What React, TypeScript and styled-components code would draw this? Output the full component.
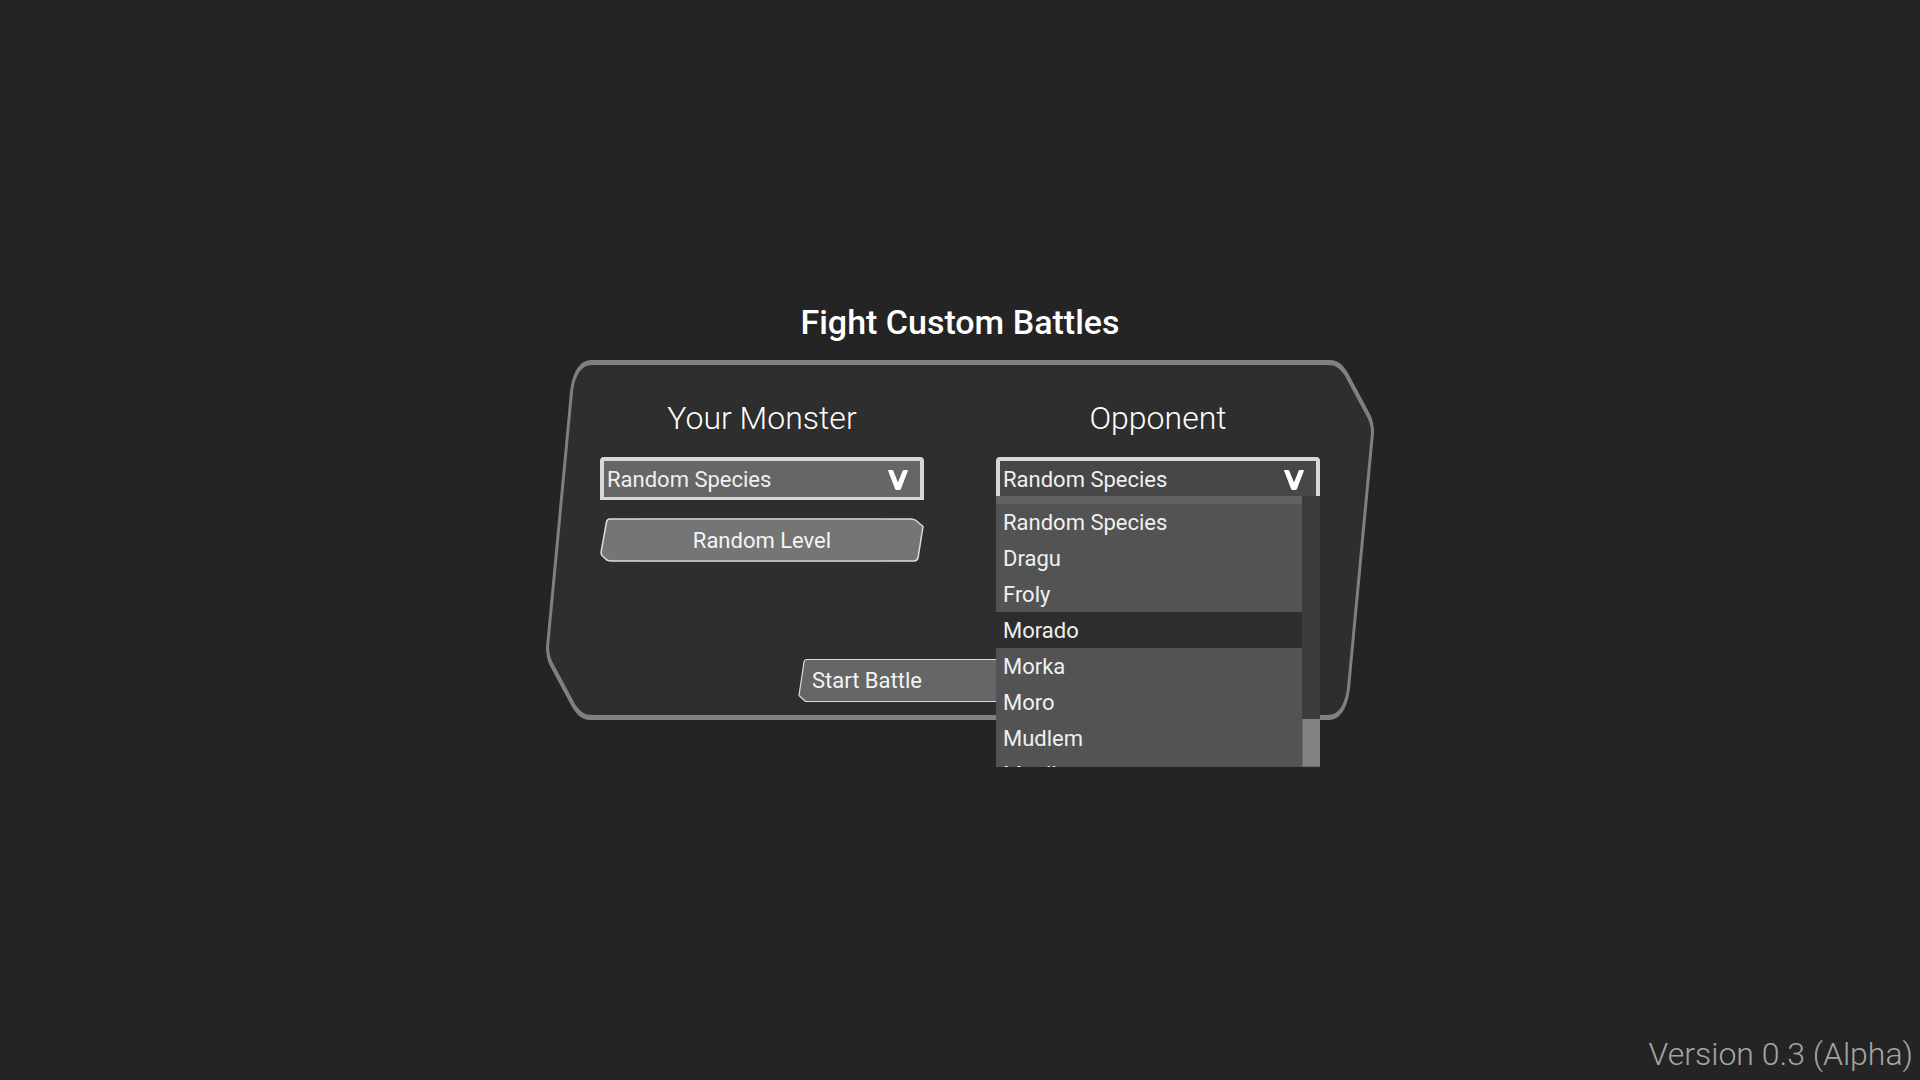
import React, { useState } from "react";
import styled, { createGlobalStyle } from "styled-components";

const GlobalStyle = createGlobalStyle`
  *, *::before, *::after { box-sizing: border-box; }
  body {
    margin: 0;
    background: #242424;
    color: #ffffff;
    font-family: Roboto, "Liberation Sans", sans-serif;
  }
`;

const Page = styled.main`
  min-height: 100vh;
  display: grid;
  grid-template-rows: 1fr auto 1fr;
  justify-items: center;
`;

const Title = styled.h1`
  margin: 0 0 18px;
  align-self: end;
  font-size: 34px;
  line-height: 40px;
  font-weight: 500;
`;

const Panel = styled.section`
  position: relative;
  isolation: isolate;
  width: 100%;
  max-width: 828px;
  padding: 38px 54px 18px;
`;

const Backdrop = styled.svg`
  position: absolute;
  inset: 0;
  z-index: -1;
  width: 100%;
  height: 100%;
`;

const Sides = styled.div`
  display: grid;
  grid-template-columns: 1fr 1fr;
  column-gap: 72px;
`;

const Side = styled.div`
  display: flex;
  flex-direction: column;
`;

const SideTitle = styled.h2`
  margin: 0 0 19px;
  text-align: center;
  font-size: 32px;
  line-height: 40px;
  font-weight: 300;
`;

const Picker = styled.div`
  position: relative;
  margin-bottom: 18px;
`;

const SpeciesSelect = styled.select<{ $open?: boolean }>`
  display: block;
  width: 100%;
  height: 43px;
  padding: 0 40px 0 3px;
  border: 4px solid #d8d8d8;
  border-bottom-width: 3px;
  border-radius: 4px 4px 0 0;
  appearance: none;
  outline: none;
  background: ${(p) => (p.$open ? "#474747" : "#666666")};
  color: #f0f0f0;
  font: 400 22px "Roboto", "Liberation Sans", sans-serif;
`;

const Arrow = styled.svg`
  position: absolute;
  top: 13px;
  right: 16px;
  width: 20px;
  height: 20px;
  pointer-events: none;
`;

const Popup = styled.div`
  position: absolute;
  top: 39px;
  left: 0;
  right: 0;
  z-index: 2;
  height: 271px;
  display: grid;
  grid-template-columns: 1fr 18px;
  overflow: hidden;
`;

const Options = styled.ul`
  margin: 0;
  padding: 0;
  list-style: none;
  overflow: hidden;
  border-top: 8px solid #626262;
  background: #535353;
`;

const Option = styled.li<{ $active?: boolean }>`
  height: 36px;
  padding: 1px 7px 0;
  background: ${(p) => (p.$active ? "#2d2d2d" : "transparent")};
  color: #f0f0f0;
  font-size: 22px;
  line-height: 36px;
`;

const Track = styled.div`
  display: flex;
  align-items: flex-end;
  background: #3c3c3c;
`;

const Thumb = styled.div`
  width: 100%;
  height: 48px;
  border: solid #6a6a6a;
  border-width: 0 0 1px 1px;
  background: #828282;
`;

const ActionButton = styled.button<{ $align: string }>`
  position: relative;
  isolation: isolate;
  width: 324px;
  max-width: 100%;
  height: 44px;
  padding: 1px 14px 0;
  border: 0;
  background: none;
  color: #f4f4f4;
  font: 400 22px "Roboto", "Liberation Sans", sans-serif;
  text-align: ${(p) => p.$align};
`;

const Actions = styled.div`
  display: flex;
  justify-content: center;
  margin-top: 96px;
`;

const Version = styled.footer`
  align-self: end;
  justify-self: end;
  padding: 0 7px 6px;
  color: #a4a4a4;
  font-size: 32px;
  line-height: 40px;
  font-weight: 300;
`;

const PanelBackdrop = () => (
  <Backdrop viewBox="0 0 828 360" preserveAspectRatio="none" aria-hidden="true">
    <path
      fill="#808080"
      d="M45 0H784C792 0 797 5 802 13L824 54Q828 62 828 73L804 328C802 346 795 360 783 360H44C36 360 31 355 26 347L4 306Q0 298 0 287L24 32C26 14 33 0 45 0Z"
    />
    <path
      fill="#2e2e2e"
      d="M46 5H782C789 5 794 8 799 16L821 57Q825 64 825 73L801 328C799 344 793 355 782 355H46C39 355 34 352 29 344L7 303Q3 296 3 287L27 32C29 16 35 5 46 5Z"
    />
  </Backdrop>
);

const ButtonBackdrop = ({ active }: { active?: boolean }) => (
  <Backdrop viewBox="0 0 324 44" preserveAspectRatio="none" aria-hidden="true">
    <path
      fill={active ? "#757575" : "#666666"}
      stroke="#dcdcdc"
      strokeWidth={active ? 1.5 : 1.2}
      d={
        active
          ? "M10 1H311Q314 1 316 2.500L323 8.500L318 40Q317 43 314 43H11Q9 43 7 42L2 37.500Q1 36 1 34.500L6.500 4Q7 1 10 1Z"
          : "M9 1.500H312Q314 1.500 316 3L323 9L318 41Q317 43.500 315 43.500H7.500L1 37.500L6 4Q6.500 1.500 9 1.500Z"
      }
    />
    {active && <path d="M40 1H284M40 43H284" stroke="#b4b4b4" strokeWidth="1" />}
  </Backdrop>
);

const ArrowIcon = () => (
  <Arrow viewBox="0 0 20 20" aria-hidden="true">
    <path
      fill="#ffffff"
      d="M0.500 0H4Q5 0 5.400 1L10 12.500L14.600 1Q15 0 16 0H19.500Q20.200 0 19.800 1L13 18.800Q12.500 20 11.400 20H8.600Q7.500 20 7 18.800L0.200 1Q-0.200 0 0.500 0Z"
    />
  </Arrow>
);

const species = [
  "Random Species",
  "Dragu",
  "Froly",
  "Morado",
  "Morka",
  "Moro",
  "Mudlem",
  "Muell",
];

export default function App() {
  const [own, setOwn] = useState(species[0]);
  const [rival, setRival] = useState(species[0]);
  const [hovered, setHovered] = useState("Morado");

  return (
    <>
      <GlobalStyle />
      <Page>
        <Title>Fight Custom Battles</Title>
        <Panel>
          <PanelBackdrop />
          <Sides>
            <Side>
              <SideTitle id="own-title">Your Monster</SideTitle>
              <Picker>
                <SpeciesSelect
                  aria-labelledby="own-title"
                  value={own}
                  onChange={(e) => setOwn(e.target.value)}
                >
                  {species.map((name) => (
                    <option key={name}>{name}</option>
                  ))}
                </SpeciesSelect>
                <ArrowIcon />
              </Picker>
              <ActionButton type="button" $align="center">
                <ButtonBackdrop active />
                Random Level
              </ActionButton>
            </Side>
            <Side>
              <SideTitle id="rival-title">Opponent</SideTitle>
              <Picker>
                <SpeciesSelect
                  $open
                  aria-labelledby="rival-title"
                  value={rival}
                  onChange={(e) => setRival(e.target.value)}
                >
                  {species.map((name) => (
                    <option key={name}>{name}</option>
                  ))}
                </SpeciesSelect>
                <ArrowIcon />
                <Popup>
                  <Options role="listbox" aria-labelledby="rival-title">
                    {species.map((name) => (
                      <Option
                        key={name}
                        role="option"
                        aria-selected={name === rival}
                        $active={name === hovered}
                        onMouseEnter={() => setHovered(name)}
                        onClick={() => setRival(name)}
                      >
                        {name}
                      </Option>
                    ))}
                  </Options>
                  <Track>
                    <Thumb />
                  </Track>
                </Popup>
              </Picker>
            </Side>
          </Sides>
          <Actions>
            <ActionButton type="button" $align="left">
              <ButtonBackdrop />
              Start Battle
            </ActionButton>
          </Actions>
        </Panel>
        <Version>Version 0.3 (Alpha)</Version>
      </Page>
    </>
  );
}
